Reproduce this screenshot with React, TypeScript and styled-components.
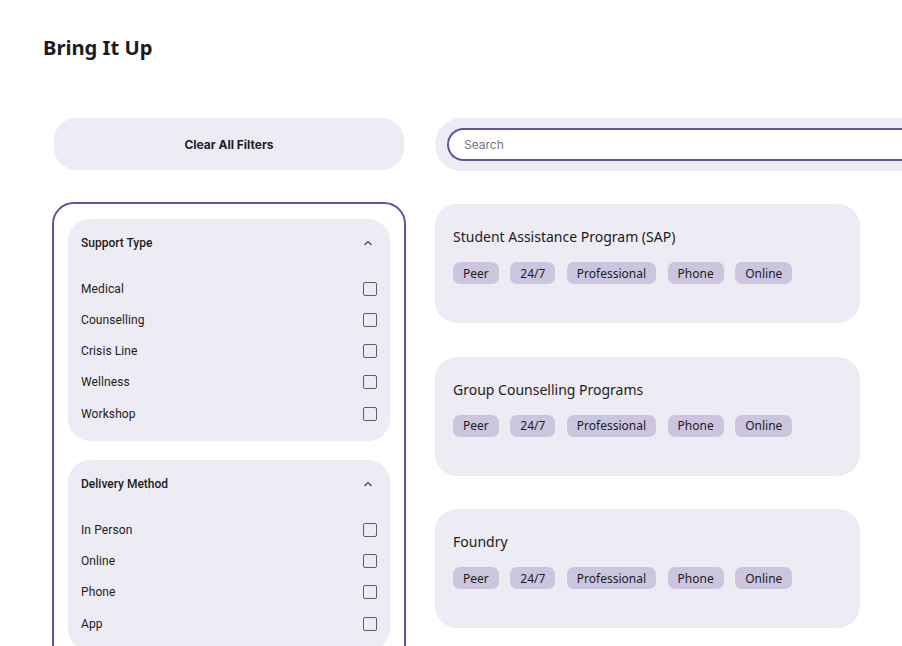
import React from "react";
import styled, { createGlobalStyle } from "styled-components";

const GlobalStyle = createGlobalStyle`
  html, body {
    margin: 0;
    padding: 0;
    background: #ffffff;
    overflow: hidden;
  }
  body {
    font-family: "Noto Sans", sans-serif;
    color: #1d1b20;
  }
  * { box-sizing: border-box; }
`;

const Page = styled.div`
  width: 902px;
  height: 646px;
  overflow: hidden;
`;

const Title = styled.h1`
  margin: 0;
  padding: 33px 0 0 43px;
  height: 118px;
  font-family: "Noto Sans", sans-serif;
  font-weight: 700;
  font-size: 20.2px;
  line-height: 28px;
  color: #1c1b1f;
`;

const Main = styled.div`
  display: grid;
  grid-template-columns: 354px 520px;
  column-gap: 29px;
  padding-left: 52px;
  align-items: start;
`;

const LeftColumn = styled.div`
  display: flex;
  flex-direction: column;
  gap: 32px;
`;

const ClearButton = styled.button`
  margin: 0 2px;
  height: 52px;
  border: none;
  border-radius: 22px;
  background: #edebf4;
  font-family: "Inter", sans-serif;
  font-weight: 700;
  font-size: 12px;
  color: #1c1b1f;
  cursor: pointer;
`;

const FilterPanel = styled.div`
  border: 2px solid #6750a4;
  border-radius: 22px;
  padding: 15px 14px;
  display: flex;
  flex-direction: column;
  gap: 19px;
  min-height: 500px;
`;

const Section = styled.section`
  background: #edebf4;
  border-radius: 22px;
  padding-bottom: 12px;
`;

const SectionHeader = styled.div`
  height: 48px;
  display: flex;
  align-items: center;
  justify-content: space-between;
  padding: 0 17px 0 13px;
  font-family: "Roboto", sans-serif;
  font-weight: 500;
  font-size: 12px;
  color: #1d1b20;
`;

const OptionList = styled.div`
  padding-top: 6px;
`;

const OptionRow = styled.label`
  height: 31.25px;
  display: flex;
  align-items: center;
  justify-content: space-between;
  padding: 0 13px 0 13px;
  font-family: "Roboto", sans-serif;
  font-size: 12px;
  letter-spacing: 0.1px;
  color: #1d1b20;
`;

const Checkbox = styled.input`
  appearance: none;
  margin: 0;
  width: 14px;
  height: 14px;
  border: 1.8px solid #5f5c64;
  border-radius: 2px;
  background: transparent;
`;

const RightColumn = styled.div`
  display: flex;
  flex-direction: column;
  gap: 33px;
`;

const SearchWrap = styled.div`
  height: 53px;
  padding: 10px 0 0 12px;
  background: #edebf4;
  border-radius: 27px 0 0 27px;
`;

const SearchInput = styled.input`
  width: 100%;
  height: 33px;
  border: 2px solid #6750a4;
  border-right: none;
  border-radius: 17px 0 0 17px;
  padding: 0 0 0 15px;
  background: #ffffff;
  font-family: "Inter", sans-serif;
  font-size: 12px;
  color: #1d1b20;
  outline: none;
  &::placeholder {
    color: #79747e;
  }
`;

const CardList = styled.div`
  display: flex;
  flex-direction: column;
  gap: 33.5px;
  width: 425px;
`;

const Card = styled.article`
  height: 119px;
  background: #edebf4;
  border-radius: 22px;
  padding: 24px 18px 0 18px;
`;

const CardTitle = styled.h2`
  margin: 0;
  font-family: "Noto Sans", sans-serif;
  font-weight: 400;
  font-size: 14px;
  line-height: 18px;
  color: #1d1b20;
`;

const TagRow = styled.div`
  display: flex;
  gap: 11.5px;
  margin-top: 16px;
`;

const Tag = styled.span`
  height: 22px;
  display: inline-flex;
  align-items: center;
  padding: 0 10px;
  border-radius: 7px;
  background: #ccc5df;
  font-family: "Noto Sans", sans-serif;
  font-size: 12px;
  color: #1d1b20;
`;

const Chevron = () => (
  <svg width="10" height="6" viewBox="0 0 10 6" fill="none">
    <path d="M1.5 5L5 1.5L8.5 5" stroke="#49454f" strokeWidth="1.2" />
  </svg>
);

const filterGroups = [
  { title: "Support Type", options: ["Medical", "Counselling", "Crisis Line", "Wellness", "Workshop"] },
  { title: "Delivery Method", options: ["In Person", "Online", "Phone", "App"] },
];

const programs = [
  "Student Assistance Program (SAP)",
  "Group Counselling Programs",
  "Foundry",
];

const tags = ["Peer", "24/7", "Professional", "Phone", "Online"];

export default function App() {
  return (
    <Page>
      <GlobalStyle />
      <Title>Bring It Up</Title>
      <Main>
        <LeftColumn>
          <ClearButton>Clear All Filters</ClearButton>
          <FilterPanel>
            {filterGroups.map((g) => (
              <Section key={g.title}>
                <SectionHeader>
                  <span>{g.title}</span>
                  <Chevron />
                </SectionHeader>
                <OptionList>
                  {g.options.map((o) => (
                    <OptionRow key={o}>
                      <span>{o}</span>
                      <Checkbox type="checkbox" />
                    </OptionRow>
                  ))}
                </OptionList>
              </Section>
            ))}
          </FilterPanel>
        </LeftColumn>
        <RightColumn>
          <SearchWrap>
            <SearchInput placeholder="Search" />
          </SearchWrap>
          <CardList>
            {programs.map((p) => (
              <Card key={p}>
                <CardTitle>{p}</CardTitle>
                <TagRow>
                  {tags.map((t) => (
                    <Tag key={t}>{t}</Tag>
                  ))}
                </TagRow>
              </Card>
            ))}
          </CardList>
        </RightColumn>
      </Main>
    </Page>
  );
}
